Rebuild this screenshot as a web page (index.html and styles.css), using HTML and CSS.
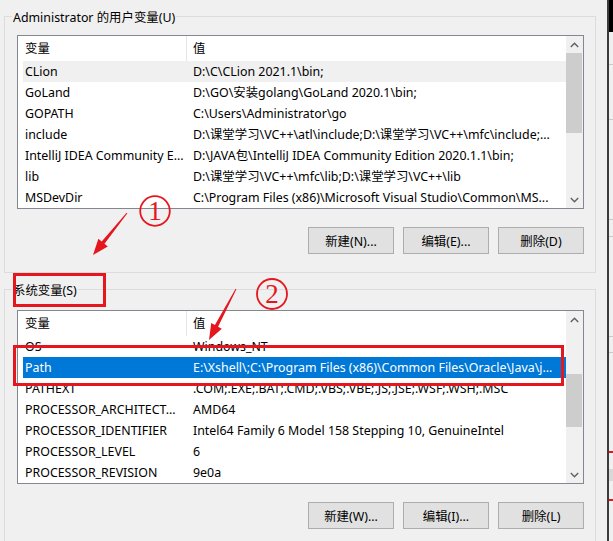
FILE: index.html
```html
<!DOCTYPE html>
<html lang="zh-CN">
<head>
<meta charset="utf-8">
<title>环境变量</title>
<link rel="stylesheet" href="styles.css">
</head>
<body>
<div class="screen">
  <div class="dialog">
    <section class="group group-user">
      <div class="group-label">Administrator 的用户变量(U)</div>
      <div class="listview lv-user">
        <div class="lv-main">
          <div class="lv-header"><div class="c1">变量</div><div class="c2">值</div></div>
          <div class="row hover"><div class="c1">CLion</div><div class="c2">D:\C\CLion 2021.1\bin;</div></div>
          <div class="row"><div class="c1">GoLand</div><div class="c2">D:\GO\安装golang\GoLand 2020.1\bin;</div></div>
          <div class="row"><div class="c1">GOPATH</div><div class="c2">C:\Users\Administrator\go</div></div>
          <div class="row"><div class="c1">include</div><div class="c2">D:\课堂学习\VC++\atl\include;D:\课堂学习\VC++\mfc\include;...</div></div>
          <div class="row"><div class="c1">IntelliJ IDEA Community E...</div><div class="c2">D:\JAVA包\IntelliJ IDEA Community Edition 2020.1.1\bin;</div></div>
          <div class="row"><div class="c1">lib</div><div class="c2">D:\课堂学习\VC++\mfc\lib;D:\课堂学习\VC++\lib</div></div>
          <div class="row"><div class="c1">MSDevDir</div><div class="c2">C:\Program Files (x86)\Microsoft Visual Studio\Common\MS...</div></div>
        </div>
        <div class="scrollbar">
          <div class="sb-btn"><svg width="9" height="6" viewBox="0 0 9 6"><polyline points="0.8,5 4.5,1.3 8.2,5" fill="none" stroke="#606060" stroke-width="1.4"/></svg></div>
          <div class="sb-track"><div class="sb-thumb thumb-user"></div></div>
          <div class="sb-btn"><svg width="9" height="6" viewBox="0 0 9 6"><polyline points="0.8,1 4.5,4.7 8.2,1" fill="none" stroke="#606060" stroke-width="1.4"/></svg></div>
        </div>
      </div>
      <div class="buttons">
        <button class="btn">新建(N)...</button>
        <button class="btn">编辑(E)...</button>
        <button class="btn">删除(D)</button>
      </div>
    </section>

    <section class="group group-sys">
      <div class="group-label">系统变量(S)</div>
      <div class="listview lv-sys">
        <div class="lv-main">
          <div class="lv-header"><div class="c1">变量</div><div class="c2">值</div></div>
          <div class="row"><div class="c1">OS</div><div class="c2">Windows_NT</div></div>
          <div class="row selected"><div class="c1">Path</div><div class="c2">E:\Xshell\;C:\Program Files (x86)\Common Files\Oracle\Java\j...</div></div>
          <div class="row"><div class="c1">PATHEXT</div><div class="c2">.COM;.EXE;.BAT;.CMD;.VBS;.VBE;.JS;.JSE;.WSF;.WSH;.MSC</div></div>
          <div class="row"><div class="c1">PROCESSOR_ARCHITECT...</div><div class="c2">AMD64</div></div>
          <div class="row"><div class="c1">PROCESSOR_IDENTIFIER</div><div class="c2">Intel64 Family 6 Model 158 Stepping 10, GenuineIntel</div></div>
          <div class="row"><div class="c1">PROCESSOR_LEVEL</div><div class="c2">6</div></div>
          <div class="row"><div class="c1">PROCESSOR_REVISION</div><div class="c2">9e0a</div></div>
        </div>
        <div class="scrollbar">
          <div class="sb-btn"><svg width="9" height="6" viewBox="0 0 9 6"><polyline points="0.8,5 4.5,1.3 8.2,5" fill="none" stroke="#606060" stroke-width="1.4"/></svg></div>
          <div class="sb-track"><div class="sb-thumb thumb-sys"></div></div>
          <div class="sb-btn"><svg width="9" height="6" viewBox="0 0 9 6"><polyline points="0.8,1 4.5,4.7 8.2,1" fill="none" stroke="#606060" stroke-width="1.4"/></svg></div>
        </div>
      </div>
      <div class="buttons">
        <button class="btn">新建(W)...</button>
        <button class="btn">编辑(I)...</button>
        <button class="btn">删除(L)</button>
      </div>
    </section>
  </div>

  <div class="edge">
    <div class="e-black"></div>
    <div class="e-seg e-h33"></div>
    <div class="e-seg e-h54"></div>
    <div class="e-seg e-h99"></div>
    <div class="e-seg e-h16"></div>
    <div class="e-seg e-h99"></div>
    <div class="e-seg e-h15"></div>
    <div class="e-seg e-h99 e-red"></div>
    <div class="e-glyph"></div>
    <div class="e-seg e-h30 e-red"></div>
  </div>

  <svg class="annot" width="613" height="541" viewBox="0 0 613 541">
    <g fill="none" stroke="#e5161e" stroke-width="3">
      <rect x="14.5" y="274.5" width="90" height="31"/>
      <rect x="14.5" y="346.5" width="548" height="38"/>
    </g>
    <g fill="#e5161e">
      <polygon points="127.4,213.3 104.5,243.7 107.8,246.4 93,255 98.4,238.8 101.7,241.5 126.6,212.7"/>
      <polygon points="236.4,289.2 218.1,326.7 221.8,328.7 209,340 211.2,323.1 214.9,325.1 235.6,288.8"/>
    </g>
    <g fill="none" stroke="#e5161e" stroke-width="1.8">
      <circle cx="155" cy="211" r="14.8"/>
      <circle cx="272" cy="294" r="15"/>
    </g>
    <g fill="#e5161e" font-family="Liberation Serif, serif" font-size="27" text-anchor="middle">
      <text x="155" y="220">1</text>
      <text x="272" y="303">2</text>
    </g>
  </svg>
</div>
</body>
</html>
```

FILE: styles.css
```css
* { box-sizing: border-box; }

html, body {
  margin: 0;
  padding: 0;
  width: 613px;
  height: 541px;
  overflow: hidden;
  background: #f0f0f0;
}

body {
  font-family: "Noto Sans", "Noto Sans CJK SC", sans-serif;
  font-size: 12.4px;
  color: #000;
}

.screen {
  position: relative;
  display: flex;
  width: 613px;
  height: 541px;
  background: #f0f0f0;
}

.dialog {
  width: 607px;
  flex: none;
  padding-top: 16px;
}

.group {
  width: 592px;
  margin-left: 4px;
  border: 1px solid #dcdcdc;
  padding: 0 11px 18px 12px;
}

.group-sys { margin-top: 16px; }

.group-label {
  width: fit-content;
  height: 16px;
  line-height: 17px;
  margin: -8px 0 0 -5px;
  padding: 0 1px;
  background: #f0f0f0;
  white-space: nowrap;
}

.listview {
  display: flex;
  width: 567px;
  height: 174px;
  border: 1px solid #828790;
  background: #fff;
}

.lv-user { margin-top: 10px; }
.lv-sys { margin-top: 12px; }

.lv-main {
  width: 548px;
  flex: none;
  overflow: hidden;
}

.lv-header {
  display: flex;
  height: 25px;
  line-height: 26px;
}

.lv-header .c1 {
  width: 169px;
  padding-left: 7px;
  border-right: 1px solid #e5e5e5;
}

.lv-header .c2 {
  padding-left: 6px;
}

.row {
  display: flex;
  height: 21px;
  line-height: 22px;
  margin-left: 5px;
  white-space: nowrap;
}

.row .c1 {
  width: 164px;
  flex: none;
  padding-left: 2px;
  overflow: hidden;
}

.row .c2 {
  flex: 1;
  padding-left: 6px;
  overflow: hidden;
}

.row.hover { background: #f0f0f0; }

.row.selected {
  background: #0078d7;
  color: #fff;
}

.scrollbar {
  width: 17px;
  flex: none;
  display: flex;
  flex-direction: column;
  background: #f0f0f0;
}

.sb-btn {
  height: 17px;
  flex: none;
  display: flex;
  align-items: center;
  justify-content: center;
}

.sb-track { flex: 1; }

.sb-thumb {
  background: #cdcdcd;
  margin: 0 1px 0 0;
}

.thumb-user { height: 80px; margin-top: 0; }
.thumb-sys { height: 53px; margin-top: 46px; }

.buttons {
  display: flex;
  justify-content: flex-end;
  gap: 9px;
  margin-top: 18px;
}

.btn {
  width: 86px;
  height: 27px;
  padding: 0;
  border: 1px solid #adadad;
  background: #e1e1e1;
  font-family: "Noto Sans", "Noto Sans CJK SC", sans-serif;
  font-size: 12.4px;
  color: #000;
}

.edge {
  width: 6px;
  flex: none;
  border-left: 2px solid #3c3c3c;
  background: #f0f0f0;
}

.e-black { height: 32px; background: #000; }
.e-seg { border-bottom: 1px solid #c8c8c8; }
.e-h33 { height: 33px; }
.e-h54 { height: 55px; }
.e-h99 { height: 100px; }
.e-h16 { height: 17px; }
.e-h15 { height: 16px; }
.e-h30 { height: 20px; }
.e-red { border-bottom: 2px solid #e5161e; }
.e-glyph { height: 12px; margin-top: 16px; background: #d8d8d8; }

.annot {
  position: absolute;
  left: 0;
  top: 0;
  pointer-events: none;
}
```
